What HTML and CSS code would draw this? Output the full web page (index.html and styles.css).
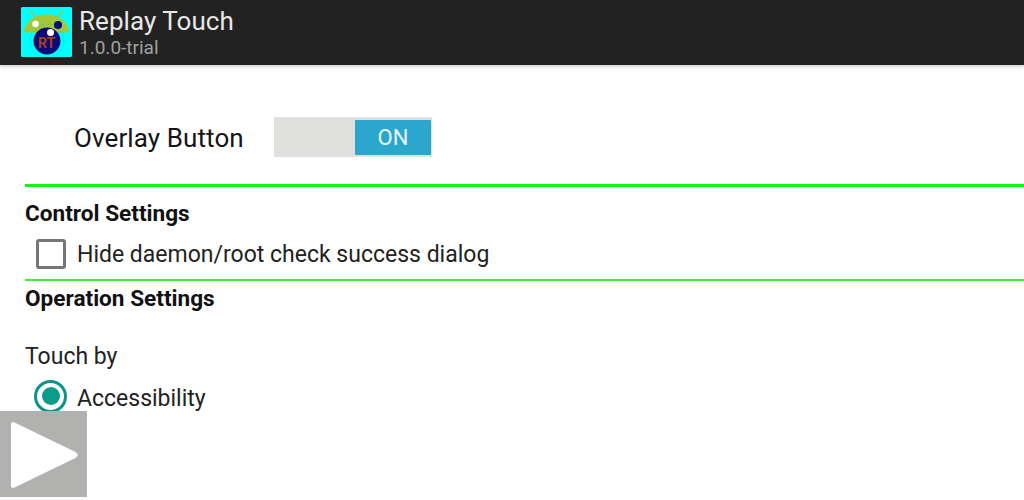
FILE: index.html
```html
<!DOCTYPE html>
<html lang="en">
<head>
<meta charset="utf-8">
<title>Replay Touch</title>
<link rel="stylesheet" href="styles.css">
</head>
<body>
<header class="appbar">
  <svg class="logo" viewBox="0 0 51 50" width="51" height="50">
    <rect width="51" height="50" rx="1.500" fill="#00ffff"/>
    <path d="M9 4l6 7M42 4l-6 7" stroke="#a4c639" stroke-width="1.600" fill="none"/>
    <path d="M3 25.500a22.500 18 0 0 1 45 0z" fill="#a4c639"/>
    <circle cx="26" cy="34" r="17" fill="none" stroke="#2aa7b5" stroke-width=".6" stroke-dasharray="1.500 1.500"/>
    <circle cx="26" cy="34" r="13.500" fill="#0a0a78"/>
    <circle cx="37" cy="18" r="4" fill="#0a0a78"/>
    <circle cx="14.500" cy="17" r="3.200" fill="#fff"/>
    <circle cx="29.500" cy="25.500" r="3.500" fill="#fff"/>
    <text x="17" y="41" class="logo-text">RT</text>
  </svg>
  <div class="appbar-text">
    <div class="app-title">Replay Touch</div>
    <div class="app-version">1.0.0-trial</div>
  </div>
</header>
<main class="content">
  <div class="overlay-row">
    <span class="overlay-label">Overlay Button</span>
    <div class="toggle"><span class="toggle-thumb">ON</span></div>
  </div>
  <hr class="rule rule-thick">
  <h2 class="section section-control">Control Settings</h2>
  <div class="check-row">
    <span class="checkbox"></span>
    <span class="option">Hide daemon/root check success dialog</span>
  </div>
  <hr class="rule rule-thin">
  <h2 class="section section-operation">Operation Settings</h2>
  <div class="touch-label">Touch by</div>
  <div class="radio-row">
    <span class="radio"><span class="radio-dot"></span></span>
    <span class="option option-radio">Accessibility</span>
  </div>
</main>
<div class="play">
  <svg viewBox="0 0 87 86" width="87" height="86">
    <path d="M14.500 11.500 L75.500 41 Q80 44 75.500 47 L14.500 76.500 Q11 78 11 74 V14 Q11 10 14.500 11.500z" fill="#fff"/>
  </svg>
</div>
</body>
</html>
```
FILE: styles.css
```css
* { box-sizing: border-box; }
html, body { margin: 0; height: 100%; }
body {
  position: relative;
  width: 1024px;
  height: 500px;
  overflow: hidden;
  background: #fff;
  color: #141414;
  font-family: Roboto, "Liberation Sans", sans-serif;
}
.appbar {
  display: flex;
  align-items: flex-start;
  height: 65px;
  padding: 7px 0 0 21px;
  gap: 7px;
  background: #212221;
  box-shadow: 0 1px 4px rgba(0,0,0,.25);
}
.logo { flex: none; }
.logo-text { font: bold 14px Roboto, sans-serif; fill: #a83a1e; }
.appbar-text { display: flex; flex-direction: column; }
.app-title { font-size: 26px; line-height: 29px; letter-spacing: .05px; color: #e8e8e8; }
.app-version { font-size: 19px; line-height: 22px; color: #a0a0a0; margin-top: 1px; }
.content { padding: 52px 0 0 25px; }
.overlay-row { display: flex; align-items: center; height: 40px; }
.overlay-label { width: 249px; padding-left: 49px; padding-top: 2px; font-size: 26px; letter-spacing: .1px; }
.toggle {
  display: flex;
  justify-content: flex-end;
  align-items: center;
  width: 158px;
  height: 40px;
  padding-right: 1px;
  background: #e0e1df;
}
.toggle-thumb {
  width: 76px;
  height: 35px;
  line-height: 36px;
  text-align: center;
  font-size: 22px;
  color: #e8f6fa;
  background: #2ba6cd;
  border-radius: 1px;
}
.rule { border: 0; margin: 0; }
.rule-thick { height: 3px; margin-top: 27px; background: #14f414; }
.rule-thin { height: 2px; background: #3cee3c; }
.section { margin: 0; font-size: 22.6px; font-weight: 700; line-height: 25px; color: #111; }
.section-control { margin-top: 14px; }
.section-operation { margin-top: 5px; }
.check-row { display: flex; align-items: center; height: 50px; margin-top: 3px; padding-left: 11px; }
.checkbox {
  width: 30px;
  height: 30px;
  border: 3px solid #767676;
  border-radius: 3px;
  margin-right: 11px;
}
.option { font-size: 23px; color: #222; }
.option-radio { padding-top: 4px; }
.touch-label { margin-top: 33px; font-size: 23px; line-height: 26px; color: #222; }
.radio-row { display: flex; align-items: center; height: 34px; margin-top: 9px; padding-left: 9px; }
.radio {
  display: flex;
  align-items: center;
  justify-content: center;
  width: 33px;
  height: 33px;
  margin-right: 10px;
  border: 3px solid #0d9488;
  border-radius: 50%;
}
.radio-dot { width: 18px; height: 18px; border-radius: 50%; background: #0d9c8a; }
.play {
  position: absolute;
  left: 0;
  top: 411px;
  width: 87px;
  height: 86px;
  background: #b1b2b0;
}
.play svg { display: block; }
```
